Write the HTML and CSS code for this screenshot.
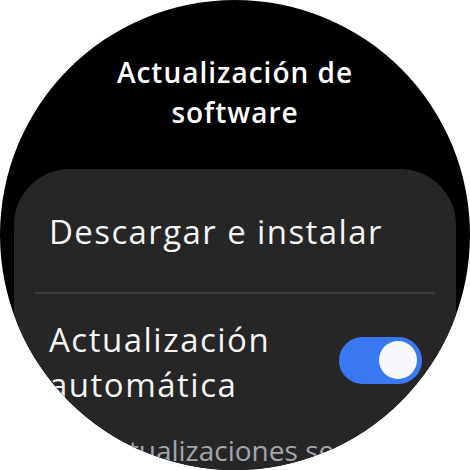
FILE: index.html
```html
<!DOCTYPE html>
<html lang="es">
<head>
<meta charset="utf-8">
<link rel="stylesheet" href="styles.css">
</head>
<body>
<div class="screen">
  <h1 class="title">Actualización de<br>software</h1>
  <div class="card">
    <div class="item item-single">Descargar e instalar</div>
    <div class="divider"></div>
    <div class="item item-toggle">
      <div class="label">Actualización<br>automática</div>
      <div class="switch"><div class="knob"></div></div>
    </div>
    <div class="desc">Las actualizaciones se descargarán automáticamente</div>
  </div>
</div>
</body>
</html>
```
FILE: styles.css
```css
html, body {
  margin: 0;
  padding: 0;
  background: #ffffff;
}
.screen {
  width: 470px;
  height: 470px;
  border-radius: 50%;
  overflow: hidden;
  background: #000000;
  display: flex;
  flex-direction: column;
  align-items: center;
  font-family: "Open Sans", Roboto, sans-serif;
  color: #f4f4f4;
}
.title {
  margin: 52px 0 0 0;
  font-size: 28px;
  line-height: 40px;
  font-weight: 600;
  letter-spacing: 1px;
  text-align: center;
  color: #ffffff;
}
.card {
  margin-top: 37px;
  width: 442px;
  flex: 1;
  background: #262626;
  border-radius: 56px 56px 0 0;
  box-sizing: border-box;
  padding-top: 43px;
  display: flex;
  flex-direction: column;
}
.item-single {
  padding-left: 35px;
  font-size: 33px;
  line-height: 40px;
  letter-spacing: 1.4px;
  white-space: nowrap;
}
.divider {
  margin: 40px 21px 0 21px;
  height: 2px;
  background: #3c3c3c;
}
.item-toggle {
  margin-top: 23px;
  padding: 0 34px 0 35px;
  display: flex;
  align-items: center;
  justify-content: space-between;
}
.label {
  font-size: 33px;
  line-height: 45px;
  letter-spacing: 1.5px;
  white-space: nowrap;
}
.switch {
  width: 83px;
  height: 47px;
  border-radius: 24px;
  background: #3b78f3;
  display: flex;
  align-items: center;
  justify-content: flex-end;
  padding-right: 5px;
  box-sizing: border-box;
  margin-top: -4px;
}
.knob {
  width: 38px;
  height: 38px;
  border-radius: 50%;
  background: #f8f8fc;
}
.desc {
  margin-top: 25px;
  padding-left: 35px;
  font-size: 28px;
  line-height: 36px;
  color: #a2a6ad;
  white-space: nowrap;
}
```
